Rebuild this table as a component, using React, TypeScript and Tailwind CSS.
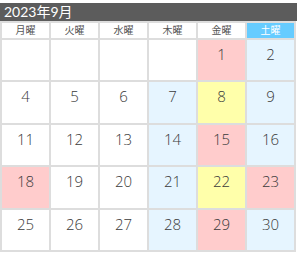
import React from 'react';

type Cell = { d?: number; c?: 'pink' | 'yellow' | 'blue' };

const days = ['月曜', '火曜', '水曜', '木曜', '金曜', '土曜'];

const weeks: Cell[][] = [
  [{}, {}, {}, {}, { d: 1, c: 'pink' }, { d: 2, c: 'blue' }],
  [{ d: 4 }, { d: 5 }, { d: 6 }, { d: 7, c: 'blue' }, { d: 8, c: 'yellow' }, { d: 9, c: 'blue' }],
  [{ d: 11 }, { d: 12 }, { d: 13 }, { d: 14, c: 'blue' }, { d: 15, c: 'pink' }, { d: 16, c: 'blue' }],
  [{ d: 18, c: 'pink' }, { d: 19 }, { d: 20 }, { d: 21, c: 'blue' }, { d: 22, c: 'yellow' }, { d: 23, c: 'pink' }],
  [{ d: 25 }, { d: 26 }, { d: 27 }, { d: 28, c: 'blue' }, { d: 29, c: 'pink' }, { d: 30, c: 'blue' }],
];

const bg = {
  pink: 'bg-[#ffcccc]',
  yellow: 'bg-[#ffffaa]',
  blue: 'bg-[#e6f5ff]',
};

const App = () => {
  return (
    <div className="w-[297px] bg-white pt-[3px] font-['Lato','Noto_Sans_CJK_JP',sans-serif]">
      <div className="h-[18px] bg-[#5c5c5c] pl-[4px] text-[14px] leading-[18px] text-white">
        2023年9月
      </div>
      <div className="grid w-[296px] grid-cols-6 gap-[2px] bg-[#dddddd] p-[2px]">
        {days.map((d, i) => (
          <div
            key={d}
            className={
              i === 5
                ? 'h-[15px] bg-[#66ccff] text-center text-[10px] leading-[15px] text-white'
                : 'h-[15px] bg-white text-center text-[10px] leading-[15px] text-[#555555]'
            }
          >
            {d}
          </div>
        ))}
        {weeks.flat().map((cell, i) => (
          <div
            key={i}
            className={`h-[40.4px] pt-[5px] text-center font-['Open_Sans',sans-serif] text-[15px] font-light leading-[18px] text-[#3a3a3a] ${
              cell.c ? bg[cell.c] : 'bg-white'
            }`}
          >
            {cell.d ?? ''}
          </div>
        ))}
      </div>
    </div>
  );
};

export default App;
